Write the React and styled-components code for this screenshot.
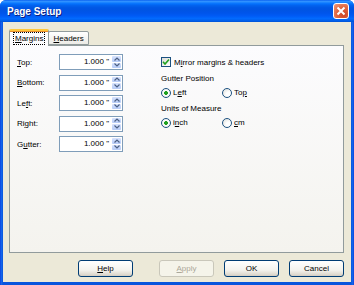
import React from "react";
import styled, { createGlobalStyle } from "styled-components";

const GlobalStyle = createGlobalStyle`
  html, body {
    margin: 0;
    padding: 0;
    background: #ffffff;
  }
  body {
    font-family: "Liberation Sans", Arial, sans-serif;
    font-size: 8px;
    color: #000000;
  }
`;

const margins = [
  { label: "Top:", key: 0 },
  { label: "Bottom:", key: 0 },
  { label: "Left:", key: 2 },
  { label: "Right:", key: 2 },
  { label: "Gutter:", key: 1 },
];

// puts an underline under the access key letter
function Accel({ text, at }) {
  return (
    <span>
      {text.slice(0, at)}
      <u>{text[at]}</u>
      {text.slice(at + 1)}
    </span>
  );
}

function Spin() {
  return (
    <Spinner>
      <SpinHalf>
        <svg width="6" height="4" viewBox="0 0 6 4">
          <path d="M0.5 3.5 L3 1 L5.5 3.5" fill="none" stroke="#4d6185" strokeWidth="1.2" />
        </svg>
      </SpinHalf>
      <SpinHalf>
        <svg width="6" height="4" viewBox="0 0 6 4">
          <path d="M0.5 0.5 L3 3 L5.5 0.5" fill="none" stroke="#4d6185" strokeWidth="1.2" />
        </svg>
      </SpinHalf>
    </Spinner>
  );
}

export default function App() {
  return (
    <>
      <GlobalStyle />
      <Window>
        <TitleBar>
          <Title>Page Setup</Title>
          <CloseButton>
            <svg width="10" height="10" viewBox="0 0 10 10">
              <path d="M1.5 1.5 L8.5 8.5 M8.5 1.5 L1.5 8.5" stroke="#ffffff" strokeWidth="2" />
            </svg>
          </CloseButton>
        </TitleBar>
        <Body>
          <TabStrip>
            <Tab $active>
              <FocusText>
                <Accel text="Margins" at={0} />
              </FocusText>
            </Tab>
            <Tab>
              <Accel text="Headers" at={0} />
            </Tab>
          </TabStrip>
          <Panel>
            <LeftColumn>
              {margins.map((m) => (
                <FieldRow key={m.label}>
                  <FieldLabel>
                    <Accel text={m.label} at={m.key} />
                  </FieldLabel>
                  <SpinBox>
                    <SpinValue>1.000 "</SpinValue>
                    <Spin />
                  </SpinBox>
                </FieldRow>
              ))}
            </LeftColumn>
            <RightColumn>
              <CheckRow>
                <CheckBox>
                  <svg width="8" height="8" viewBox="0 0 8 8">
                    <path d="M1 3.8 L3 6 L7 1.5" fill="none" stroke="#21a121" strokeWidth="1.6" />
                  </svg>
                </CheckBox>
                <span>
                  M<u>i</u>rror margins &amp; headers
                </span>
              </CheckRow>
              <GroupLabel>Gutter Position</GroupLabel>
              <RadioRow>
                <RadioOption>
                  <Radio $checked />
                  <Accel text="Left" at={1} />
                </RadioOption>
                <RadioOption>
                  <Radio />
                  <Accel text="Top" at={2} />
                </RadioOption>
              </RadioRow>
              <GroupLabel $gap={4}>Units of Measure</GroupLabel>
              <RadioRow>
                <RadioOption>
                  <Radio $checked />
                  <Accel text="inch" at={1} />
                </RadioOption>
                <RadioOption>
                  <Radio />
                  <Accel text="cm" at={0} />
                </RadioOption>
              </RadioRow>
            </RightColumn>
          </Panel>
          <ButtonRow>
            <Button $apart>
              <Accel text="Help" at={0} />
            </Button>
            <Button disabled>
              <Accel text="Apply" at={0} />
            </Button>
            <Button>OK</Button>
            <Button>Cancel</Button>
          </ButtonRow>
        </Body>
      </Window>
    </>
  );
}

const Window = styled.div`
  width: 354px;
  height: 285px;
  display: flex;
  flex-direction: column;
  background: linear-gradient(to right, #0831d9 0px, #166aee 1px, #0855dd 3px, #0855dd 351px, #166aee 353px, #0831d9 354px);
  border-radius: 6px 6px 0 0;
  overflow: hidden;
`;

const TitleBar = styled.div`
  height: 22px;
  flex: none;
  display: flex;
  align-items: center;
  justify-content: space-between;
  padding: 0 5px 0 7px;
  background: linear-gradient(
    180deg,
    #0058ee 0%,
    #3593ff 5%,
    #288eff 9%,
    #127dff 13%,
    #036ffc 18%,
    #0262ee 25%,
    #0057e5 35%,
    #0054e3 45%,
    #0055eb 60%,
    #005bf5 72%,
    #026afe 84%,
    #0062ef 92%,
    #0052d6 100%
  );
`;

const Title = styled.span`
  color: #ffffff;
  font-family: "Liberation Sans", Arial, sans-serif;
  font-weight: bold;
  font-size: 10px;
  text-shadow: 1px 1px 0 #0a1e80;
  padding-top: 1px;
`;

const CloseButton = styled.div`
  width: 14px;
  height: 14px;
  display: flex;
  align-items: center;
  justify-content: center;
  border: 1px solid #ffffff;
  border-radius: 3px;
  background: radial-gradient(circle at 70% 75%, #cc4424 0%, #e2663f 50%, #ef9a7c 100%);
`;

const Body = styled.div`
  flex: 1;
  display: flex;
  flex-direction: column;
  margin: 0 3px 3px 3px;
  padding: 7px 7px 5px 6px;
  background: #ece9d8;
`;

const TabStrip = styled.div`
  display: flex;
  align-items: flex-end;
  height: 16px;
  position: relative;
  z-index: 1;
`;

const Tab = styled.div`
  display: flex;
  align-items: center;
  justify-content: center;
  box-sizing: border-box;
  height: ${(p) => (p.$active ? "17px" : "14px")};
  margin-bottom: ${(p) => (p.$active ? "-1px" : "0")};
  padding: ${(p) => (p.$active ? "0 4px" : "0 4px")};
  border: 1px solid #919b9c;
  border-bottom: ${(p) => (p.$active ? "none" : "1px solid #919b9c")};
  border-top: ${(p) => (p.$active ? "2px solid #ffc83c" : "1px solid #919b9c")};
  border-radius: 2px 2px 0 0;
  background: ${(p) => (p.$active ? "#fcfcfe" : "linear-gradient(#ffffff, #ecebe6)")};
  box-shadow: ${(p) => (p.$active ? "inset 0 1px 0 #e68b2c" : "none")};
  margin-left: ${(p) => (p.$active ? "0" : "-1px")};
`;

const FocusText = styled.span`
  outline: 1px dotted #000000;
  padding: 0 1px;
  line-height: 11px;
`;

const Panel = styled.div`
  flex: 1;
  display: flex;
  gap: 38px;
  padding: 8px 7px;
  border: 1px solid #919b9c;
  background: linear-gradient(#fcfcfe 0%, #f4f3ee 100%);
`;

const LeftColumn = styled.div`
  display: flex;
  flex-direction: column;
  gap: 4.5px;
`;

const FieldRow = styled.div`
  display: flex;
  align-items: center;
  height: 16px;
`;

const FieldLabel = styled.span`
  width: 42px;
`;

const SpinBox = styled.div`
  box-sizing: border-box;
  width: 64px;
  height: 16px;
  display: flex;
  align-items: stretch;
  border: 1px solid #7f9db9;
  background: #ffffff;
  padding: 1px;
`;

const SpinValue = styled.span`
  flex: 1;
  text-align: right;
  padding-right: 3px;
  line-height: 12px;
`;

const Spinner = styled.div`
  width: 9px;
  display: flex;
  flex-direction: column;
  gap: 1px;
`;

const SpinHalf = styled.div`
  flex: 1;
  display: flex;
  align-items: center;
  justify-content: center;
  border-radius: 1px;
  background: linear-gradient(#d6e2fd, #b6cbf7);
`;

const RightColumn = styled.div`
  display: flex;
  flex-direction: column;
`;

const CheckRow = styled.div`
  display: flex;
  align-items: center;
  gap: 3px;
  height: 16px;
`;

const CheckBox = styled.div`
  box-sizing: border-box;
  width: 10px;
  height: 10px;
  display: flex;
  align-items: center;
  justify-content: center;
  border: 1px solid #1c5180;
  background: linear-gradient(135deg, #dcdcd7, #ffffff);
`;

const GroupLabel = styled.div`
  height: 12px;
  line-height: 12px;
  margin-top: ${(p) => p.$gap || 2.5}px;
`;

const RadioRow = styled.div`
  display: flex;
  height: 12px;
  margin-top: 2px;
`;

const RadioOption = styled.div`
  width: 61px;
  display: flex;
  align-items: center;
  gap: 2px;
`;

const Radio = styled.div`
  box-sizing: border-box;
  width: 10px;
  height: 10px;
  border-radius: 50%;
  border: 1px solid #1c5180;
  background: ${(p) =>
    p.$checked
      ? "radial-gradient(circle, #21a121 0, #21a121 1.6px, #ffffff 2.2px, #e8e8e2 100%)"
      : "radial-gradient(circle at 70% 70%, #ffffff 0, #ffffff 30%, #dcdcd7 100%)"};
`;

const ButtonRow = styled.div`
  display: flex;
  justify-content: flex-end;
  gap: 10px;
  margin-top: 7px;
`;

const Button = styled.button`
  box-sizing: border-box;
  width: 55px;
  height: 17px;
  padding: 0;
  margin-right: ${(p) => (p.$apart ? "16px" : "0")};
  font-family: "Liberation Sans", Arial, sans-serif;
  font-size: 8px;
  color: #000000;
  border: 1px solid #003c74;
  border-radius: 3px;
  background: linear-gradient(#ffffff 0%, #f4f3ee 60%, #d6d0c5 100%);
  box-shadow: inset 0 -1px 0 #d6d0c5;

  &:disabled {
    color: #aca899;
    border-color: #c9c7ba;
    background: #f5f4ea;
    box-shadow: none;
  }
`;
